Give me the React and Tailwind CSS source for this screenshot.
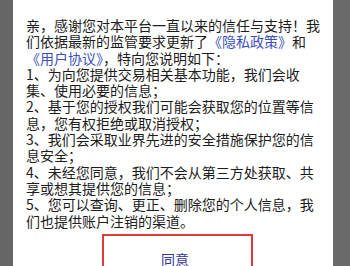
import React from "react";

const items = [
  "1、为向您提供交易相关基本功能，我们会收集、使用必要的信息；",
  "2、基于您的授权我们可能会获取您的位置等信息，您有权拒绝或取消授权；",
  "3、我们会采取业界先进的安全措施保护您的信息安全；",
  "4、未经您同意，我们不会从第三方处获取、共享或想其提供您的信息；",
  "5、您可以查询、更正、删除您的个人信息，我们也提供账户注销的渠道。",
];

const PrivacyDialog = () => {
  return (
    <div
      className="h-[266px] w-[350px] overflow-hidden flex bg-[#6a6a6a]"
      style={{ fontFamily: '"Noto Sans CJK SC", "Noto Sans", sans-serif' }}
    >
      <div className="w-[13px] shrink-0 bg-[#666666]" />
      {/* Dialog */}
      <div className="w-[320px] shrink-0 bg-white px-[13px] pt-[17px]">
        <div className="text-[14px] leading-[16.3px] text-[#1c1c1c]">
          <p>
            亲，感谢您对本平台一直以来的信任与支持！我们依据最新的监管要求更新了
            <span className="text-[#3b4fb8]">《隐私政策》</span>和
            <span className="text-[#3b4fb8]">《用户协议》</span>，特向您说明如下：
          </p>
          {items.map((t) => (
            <p key={t}>{t}</p>
          ))}
        </div>
        <div className="mt-[5px] ml-[76px] w-[151px] h-[60px] border-2 border-[#dd3b3b] pt-[15px] pl-[57px] text-[14px] leading-[16.3px] text-[#34349a]">
          同意
        </div>
      </div>
      <div className="flex-1 bg-[#6a6a6a]" />
    </div>
  );
};

export default function App() {
  return <PrivacyDialog />;
}
